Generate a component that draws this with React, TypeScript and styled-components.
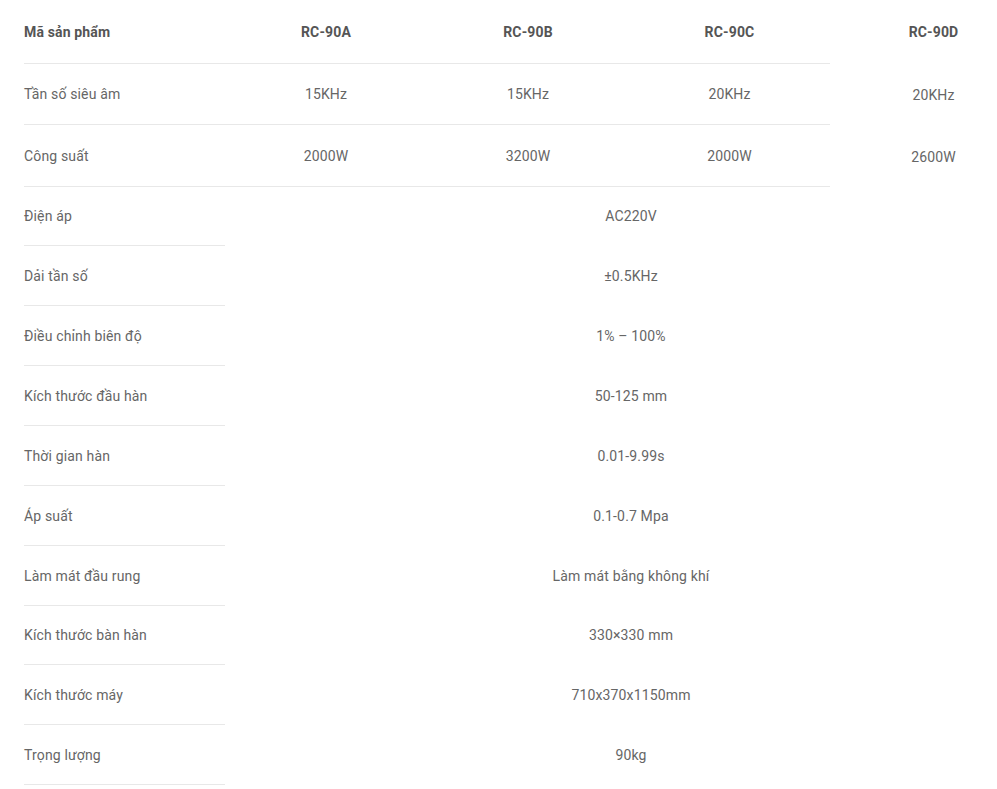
import React from 'react'
import styled, { createGlobalStyle } from 'styled-components'

const GlobalStyle = createGlobalStyle`
  html, body {
    margin: 0;
    padding: 0;
    background: #fff;
    overflow: hidden;
  }
  body {
    font-family: Roboto, 'Liberation Sans', sans-serif;
    font-size: 14px;
    letter-spacing: 0.15px;
    color: #666;
  }
`

const Table = styled.div`
  display: grid;
  grid-template-columns: 201px 202px 202px 201px 207px;
  grid-template-rows: 64px 61px 62px 59px repeat(6, 60px) 59px 60px 60px;
  margin-left: 24px;
  width: 1013px;
`

const Cell = styled.div<{ $head?: boolean; $label?: boolean; $line?: boolean; $span?: number; $nudge?: boolean }>`
  display: flex;
  align-items: center;
  justify-content: ${({ $label }) => ($label ? 'flex-start' : 'center')};
  grid-column: ${({ $span }) => ($span ? `span ${$span}` : 'auto')};
  border-bottom: 1px solid ${({ $line }) => ($line ? '#e8e8e8' : 'transparent')};
  font-weight: ${({ $head }) => ($head ? 700 : 400)};
  color: ${({ $head }) => ($head ? '#555' : '#666')};
  padding-top: ${({ $nudge }) => ($nudge ? '2px' : '0')};
  white-space: nowrap;
`

const models = ['RC-90A', 'RC-90B', 'RC-90C', 'RC-90D']

const perModel = [
  { label: 'Tần số siêu âm', values: ['15KHz', '15KHz', '20KHz', '20KHz'] },
  { label: 'Công suất', values: ['2000W', '3200W', '2000W', '2600W'] },
]

const shared = [
  ['Điện áp', 'AC220V'],
  ['Dải tần số', '±0.5KHz'],
  ['Điều chỉnh biên độ', '1% – 100%'],
  ['Kích thước đầu hàn', '50-125 mm'],
  ['Thời gian hàn', '0.01-9.99s'],
  ['Áp suất', '0.1-0.7 Mpa'],
  ['Làm mát đầu rung', 'Làm mát bằng không khí'],
  ['Kích thước bàn hàn', '330×330 mm'],
  ['Kích thước máy', '710x370x1150mm'],
  ['Trọng lượng', '90kg'],
]

const App = () => {
  return (
    <>
      <GlobalStyle />
      <Table>
        <Cell $head $label $line>Mã sản phẩm</Cell>
        {models.map((m, i) => (
          <Cell key={m} $head $line={i < 3}>{m}</Cell>
        ))}
        {perModel.map((row) => (
          <React.Fragment key={row.label}>
            <Cell $label $line>{row.label}</Cell>
            {row.values.map((v, i) => (
              <Cell key={i} $line={i < 3} $nudge={i === 3}>{v}</Cell>
            ))}
          </React.Fragment>
        ))}
        {shared.map(([label, value]) => (
          <React.Fragment key={label}>
            <Cell $label $line>{label}</Cell>
            <Cell $span={4}>{value}</Cell>
          </React.Fragment>
        ))}
      </Table>
    </>
  )
}

export default App
